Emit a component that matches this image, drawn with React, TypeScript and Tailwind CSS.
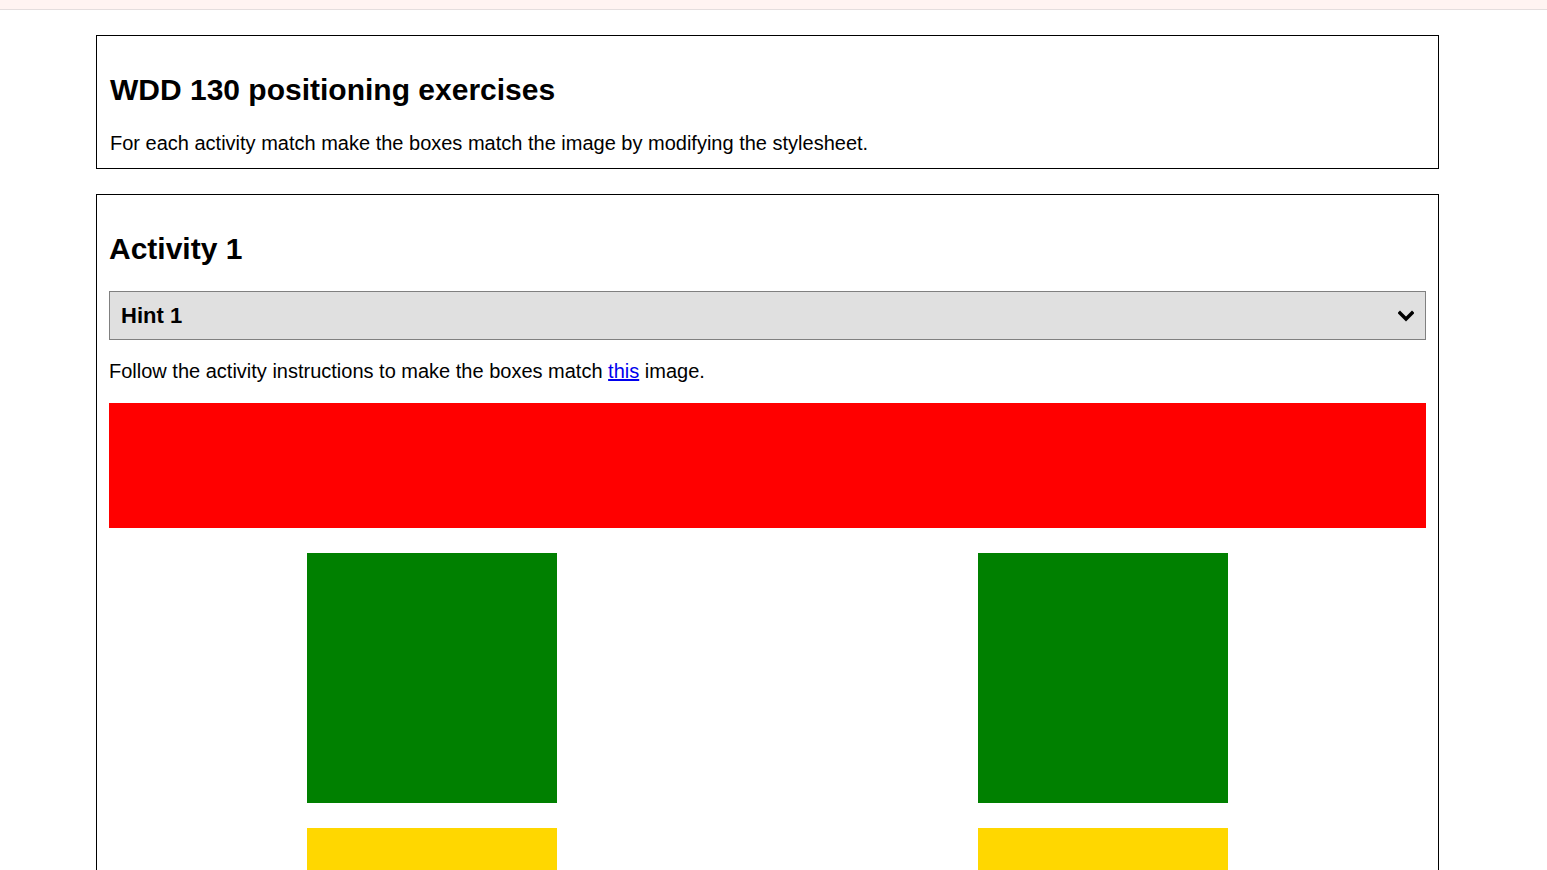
import React from 'react';

function Chevron() {
  return (
    <svg width="16" height="12" viewBox="0 0 16 12" className="shrink-0">
      <polyline
        points="2,3 8,9 14,3"
        fill="none"
        stroke="#000"
        strokeWidth="3.4"
        strokeLinecap="square"
        strokeLinejoin="miter"
      />
    </svg>
  );
}

export default function App() {
  return (
    <div className="min-h-screen bg-white text-black font-['Liberation_Sans',Arial,sans-serif]">
      {/* top strip */}
      <div className="h-[10px] bg-[#fff4f2] border-b border-[#e4dede]" />

      <main className="ml-[96px] w-[1343px] pt-[25px] flex flex-col gap-[25px]">
        {/* Intro */}
        <section className="border border-black pt-[37px] px-[13px] pb-[13px]">
          <h1 className="text-[30px] font-bold leading-[34px]">WDD 130 positioning exercises</h1>
          <p className="mt-[25px] text-[20px] leading-[23px]">
            For each activity match make the boxes match the image by modifying the stylesheet.
          </p>
        </section>

        {/* Activity 1 */}
        <section className="border border-black pt-[37px] px-[12px] pb-[40px]">
          <h2 className="text-[30px] font-bold leading-[34px]">Activity 1</h2>

          <div className="mt-[25px] h-[49px] bg-[#e0e0e0] border border-[#808080] flex items-center justify-between pl-[11px] pr-[11px]">
            <span className="text-[22px] font-bold leading-[25px]">Hint 1</span>
            <Chevron />
          </div>

          <p className="mt-[20px] text-[20px] leading-[23px]">
            Follow the activity instructions to make the boxes match{' '}
            <a href="#" className="text-[#0000ee] underline">this</a> image.
          </p>

          <div className="mt-[20px] h-[125px] bg-[#ff0000]" />

          <div className="mt-[25px] flex justify-between px-[198px]">
            <div className="flex flex-col gap-[25px]">
              <div className="w-[250px] h-[250px] bg-[#008000]" />
              <div className="w-[250px] h-[125px] bg-[#ffd700]" />
            </div>
            <div className="flex flex-col gap-[25px]">
              <div className="w-[250px] h-[250px] bg-[#008000]" />
              <div className="w-[250px] h-[125px] bg-[#ffd700]" />
            </div>
          </div>
        </section>
      </main>
    </div>
  );
}
